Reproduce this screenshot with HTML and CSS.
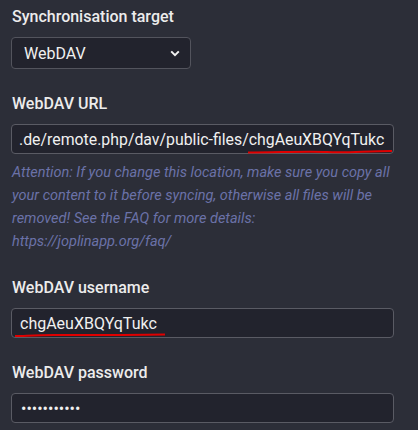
FILE: index.html
```html
<!DOCTYPE html>
<html>
<head>
<meta charset="utf-8">
<link rel="stylesheet" href="styles.css">
</head>
<body>
<div class="page">
  <section class="field first">
    <div class="label">Synchronisation target</div>
    <div class="select">
      <span>WebDAV</span>
      <svg class="chev" width="10" height="7" viewBox="0 0 10 7"><path d="M1.2 1.4 L5 5.2 L8.8 1.4" fill="none" stroke="#f2f2f2" stroke-width="2"/></svg>
    </div>
  </section>

  <section class="field">
    <div class="label">WebDAV URL</div>
    <div class="input url">
      <span>.de/remote.php/dav/public-files/chgAeuXBQYqTukc</span>
      <svg class="mark mark-url" width="146" height="6" viewBox="0 0 146 6"><path d="M1 3.5 C30 3.5 60 2 80 3 C100 4 120 2 145 2" fill="none" stroke="#e00000" stroke-width="2"/></svg>
    </div>
    <p class="help">Attention: If you change this location, make sure you copy all your content to it before syncing, otherwise all files will be removed! See the FAQ for more details: https://joplinapp.org/faq/</p>
  </section>

  <section class="field">
    <div class="label">WebDAV username</div>
    <div class="input user">
      <span>chgAeuXBQYqTukc</span>
      <svg class="mark mark-user" width="152" height="6" viewBox="0 0 152 6"><path d="M1 4 C10 4 20 3 40 3 C80 3 120 3 151 2.5" fill="none" stroke="#e00000" stroke-width="2"/></svg>
    </div>
  </section>

  <section class="field">
    <div class="label">WebDAV password</div>
    <div class="input pass">
      <span>•••••••••••</span>
    </div>
  </section>
</div>
</body>
</html>
```

FILE: styles.css
```css
html, body {
  margin: 0;
  padding: 0;
  background: #2c2e38;
}
.page {
  padding: 8px 24px 0 11px;
  font-family: Roboto, "Liberation Sans", sans-serif;
  color: #e9e9ea;
}
.field {
  margin-top: 26px;
}
.field.first {
  margin-top: 0;
}
.label {
  font-size: 16px;
  line-height: 18px;
  font-weight: 500;
  color: #ececec;
  margin-left: 1px;
  margin-bottom: 11px;
}
.select {
  width: 180px;
  height: 32px;
  box-sizing: border-box;
  border: 1px solid #53545d;
  border-radius: 4px;
  background: #22232d;
  display: flex;
  align-items: center;
  justify-content: space-between;
  padding: 0 10px 0 12px;
  font-size: 16px;
  color: #f0f0f0;
}
.chev {
  display: block;
}
.input {
  position: relative;
  width: 383px;
  height: 30px;
  box-sizing: border-box;
  border: 1px solid #5a5b64;
  border-radius: 4px;
  background: #22232d;
  display: flex;
  align-items: center;
  padding: 0 7px;
  font-size: 16px;
  color: #f0f0f0;
  white-space: nowrap;
  overflow: visible;
}
.input.url { font-size: 15.85px; }
.input.user { padding-left: 8px; }
.input.pass { padding-left: 9px; font-size: 16px; }
.mark {
  position: absolute;
  display: block;
}
.mark-url {
  left: 235px;
  top: 24px;
}
.mark-user {
  left: 2px;
  top: 23px;
}
.help {
  margin: 7px 0 0 1px;
  font-size: 14.5px;
  line-height: 23px;
  font-style: italic;
  color: #6b72a8;
  width: 384px;
}
```
